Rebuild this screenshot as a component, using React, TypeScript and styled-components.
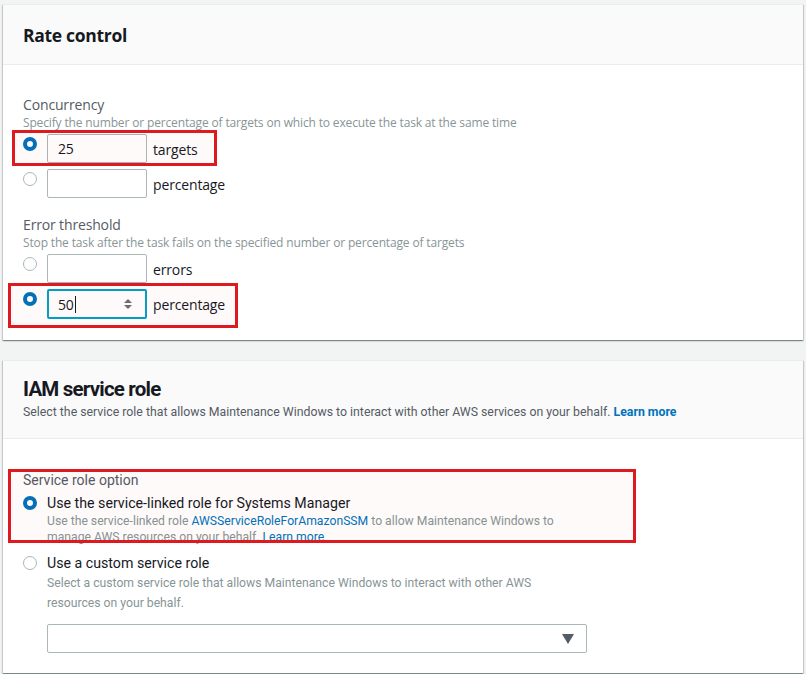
import React from 'react'
import styled, { createGlobalStyle } from 'styled-components'

const Global = createGlobalStyle`
  body {
    margin: 0;
    background: #f2f3f3;
    font-family: "Open Sans", "Noto Sans", sans-serif;
    color: #16191f;
  }
`

const App = () => {
  return (
    <Page>
      <Global />
      <Panel $font='"Open Sans", sans-serif' $spacing={-0.15}>
        <PanelHeader $h={59}>
          <Title $size={17.5} $spacing={-0.3}>Rate control</Title>
        </PanelHeader>
        <PanelBody $top={30} $bottom={12}>
          <FieldLabel>Concurrency</FieldLabel>
          <FieldHint>Specify the number or percentage of targets on which to execute the task at the same time</FieldHint>

          <Highlight $left={11} $pl={8} $pr={16} $pt={1} $mt={-1} $mb={-2}>
            <ChoiceRow>
              <Radio $checked />
              <NumberBox>25</NumberBox>
              <Unit>targets</Unit>
            </ChoiceRow>
          </Highlight>
          <ChoiceRow $mt={5}>
            <Radio />
            <NumberBox />
            <Unit>percentage</Unit>
          </ChoiceRow>

          <FieldLabel $mt={17}>Error threshold</FieldLabel>
          <FieldHint>Stop the task after the task fails on the specified number or percentage of targets</FieldHint>
          <ChoiceRow $mt={3}>
            <Radio />
            <NumberBox />
            <Unit>errors</Unit>
          </ChoiceRow>
          <Highlight $left={15} $pl={12} $pr={10} $pt={3} $pb={6}>
            <ChoiceRow>
              <Radio $checked />
              <NumberBox $focused>
                50<Caret />
                <Spinner width="10" height="12" viewBox="0 0 10 12">
                  <path d="M5 1 L9 5 H1 Z" fill="#687078" />
                  <path d="M5 11 L9 7 H1 Z" fill="#687078" />
                </Spinner>
              </NumberBox>
              <Unit>percentage</Unit>
            </ChoiceRow>
          </Highlight>
        </PanelBody>
      </Panel>

      <Panel $font='Roboto, "Open Sans", sans-serif' $spacing={0}>
        <PanelHeader $pt={14} $pb={17}>
          <Title $size={20.5} $spacing={-0.8}>IAM service role</Title>
          <HeaderText>
            Select the service role that allows Maintenance Windows to interact with other AWS services on your behalf.{' '}
            <Link $bold>Learn more</Link>
          </HeaderText>
        </PanelHeader>
        <PanelBody $top={30} $bottom={20}>
          <Highlight $left={15} $pl={12} $pr={0} $pt={0} $block>
            <OptionGroup>
              <FieldLabel $lh={16}>Service role option</FieldLabel>
              <OptionRow $mt={5}>
                <Radio $checked $mt={3} />
                <OptionText>
                  <OptionTitle>Use the service-linked role for Systems Manager</OptionTitle>
                  <OptionHint $lh={16}>
                    Use the service-linked role <Link>AWSServiceRoleForAmazonSSM</Link> to allow Maintenance Windows to
                    <br />
                    manage AWS resources on your behalf. <Link>Learn more</Link>
                  </OptionHint>
                </OptionText>
              </OptionRow>
            </OptionGroup>
          </Highlight>
          <OptionRow $mt={10}>
            <Radio $mt={3} />
            <OptionText>
              <OptionTitle>Use a custom service role</OptionTitle>
              <OptionHint $lh={20}>
                Select a custom service role that allows Maintenance Windows to interact with other AWS
                <br />
                resources on your behalf.
              </OptionHint>
              <SelectBox>
                <svg width="12" height="10" viewBox="0 0 12 10">
                  <path d="M0 0 H12 L6 10 Z" fill="#545b64" />
                </svg>
              </SelectBox>
            </OptionText>
          </OptionRow>
        </PanelBody>
      </Panel>
    </Page>
  )
}

export default App

const Page = styled.div`
  padding: 4px 3px 0 3px;
  display: flex;
  flex-direction: column;
  gap: 20px;
  height: 670px;
  overflow: hidden;
`

const Panel = styled.section<{ $font: string; $spacing: number }>`
  background: #ffffff;
  border-top: 1px solid #eaeded;
  box-shadow: 0 1px 1px 0 rgba(0, 28, 36, 0.3), 1px 1px 1px 0 rgba(0, 28, 36, 0.15),
    -1px 1px 1px 0 rgba(0, 28, 36, 0.15);
  font-family: ${(p) => p.$font};
  letter-spacing: ${(p) => p.$spacing}px;
  flex-shrink: 0;
`

const PanelHeader = styled.header<{ $h?: number; $pt?: number; $pb?: number }>`
  background: #fafafa;
  border-bottom: 1px solid #eaeded;
  padding: ${(p) => p.$pt ?? 0}px 20px ${(p) => p.$pb ?? 0}px;
  height: ${(p) => (p.$h ? `${p.$h}px` : 'auto')};
  display: flex;
  flex-direction: column;
  justify-content: center;
`

const Title = styled.h2<{ $size: number; $spacing: number }>`
  margin: 0;
  font-size: ${(p) => p.$size}px;
  line-height: 28px;
  font-weight: 700;
  color: #16191f;
  letter-spacing: ${(p) => p.$spacing}px;
`

const HeaderText = styled.p`
  margin: 0;
  font-size: 12.3px;
  line-height: 18px;
  color: #545b64;
`

const Link = styled.span<{ $bold?: boolean }>`
  color: #0073bb;
  font-weight: ${(p) => (p.$bold ? 700 : 400)};
`

const PanelBody = styled.div<{ $top: number; $bottom: number }>`
  padding: ${(p) => p.$top}px 20px ${(p) => p.$bottom}px;
`

const FieldLabel = styled.div<{ $mt?: number; $lh?: number }>`
  margin-top: ${(p) => p.$mt ?? 0}px;
  font-size: 14px;
  line-height: ${(p) => p.$lh ?? 20}px;
  color: #545b64;
`

const FieldHint = styled.div`
  font-size: 12px;
  line-height: 16px;
  color: #879596;
`

const Highlight = styled.div<{
  $left: number
  $pl: number
  $pr: number
  $pt: number
  $pb?: number
  $mt?: number
  $mb?: number
  $block?: boolean
}>`
  position: relative;
  display: ${(p) => (p.$block ? 'block' : 'flex')};
  width: ${(p) => (p.$block ? '628px' : 'fit-content')};
  box-sizing: border-box;
  margin: ${(p) => p.$mt ?? 0}px 0 ${(p) => p.$mb ?? 0}px -${(p) => p.$left}px;
  padding: ${(p) => p.$pt + 3}px ${(p) => p.$pr + 3}px ${(p) => (p.$pb ?? 0) + 3}px
    ${(p) => p.$pl + 3}px;

  &::after {
    content: '';
    position: absolute;
    inset: 0;
    border: 3px solid #dd1a1f;
    background: rgba(220, 0, 0, 0.02);
    pointer-events: none;
  }
`

const ChoiceRow = styled.div<{ $mt?: number }>`
  display: flex;
  align-items: flex-start;
  margin-top: ${(p) => p.$mt ?? 0}px;
`

const Radio = styled.span<{ $checked?: boolean; $mt?: number }>`
  width: 14px;
  height: 14px;
  box-sizing: border-box;
  border-radius: 50%;
  flex-shrink: 0;
  margin-top: ${(p) => p.$mt ?? 3}px;
  margin-right: 10px;
  background: #ffffff;
  border: ${(p) => (p.$checked ? '4px solid #0073bb' : '1px solid #aab7b8')};
`

const NumberBox = styled.div<{ $focused?: boolean }>`
  width: 100px;
  height: ${(p) => (p.$focused ? 30 : 29)}px;
  box-sizing: border-box;
  display: flex;
  align-items: center;
  font-size: 14px;
  color: #16191f;
  border: ${(p) => (p.$focused ? '2px solid #00a1c9' : '1px solid #aab7b8')};
  border-radius: 2px;
  background: #ffffff;
  padding: 0 0 0 ${(p) => (p.$focused ? 9 : 10)}px;
`

const Caret = styled.span`
  width: 1px;
  height: 17px;
  background: #16191f;
  margin-left: 1px;
`

const Spinner = styled.svg`
  margin-left: auto;
  margin-right: 12px;
`

const Unit = styled.span`
  margin-left: 6px;
  font-size: 14px;
  line-height: 20px;
  margin-top: 6px;
  color: #16191f;
`

const OptionGroup = styled.div`
  display: flex;
  flex-direction: column;
  margin-bottom: -5px;
`

const OptionRow = styled.div<{ $mt?: number }>`
  display: flex;
  align-items: flex-start;
  margin-top: ${(p) => p.$mt ?? 0}px;
`

const OptionText = styled.div`
  display: flex;
  flex-direction: column;
`

const OptionTitle = styled.div`
  font-size: 14.2px;
  line-height: 20px;
  color: #16191f;
`

const OptionHint = styled.div<{ $lh: number }>`
  font-size: 12.2px;
  line-height: ${(p) => p.$lh}px;
  color: #879596;
`

const SelectBox = styled.div`
  margin-top: 11px;
  width: 540px;
  height: 29px;
  box-sizing: border-box;
  border: 1px solid #aab7b8;
  border-radius: 2px;
  display: flex;
  align-items: center;
  justify-content: flex-end;
  padding-right: 12px;
`
